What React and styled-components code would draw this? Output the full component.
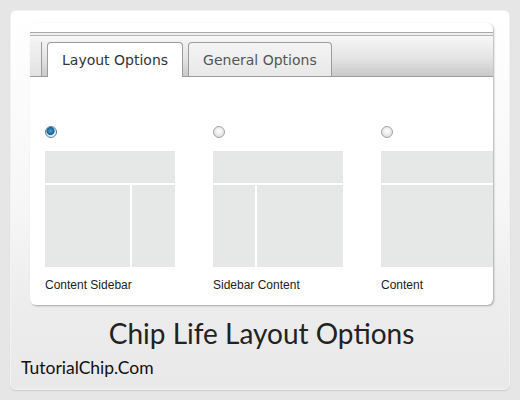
import React, { useState } from "react";
import styled, { createGlobalStyle } from "styled-components";

const Global = createGlobalStyle`
  html, body { margin: 0; padding: 0; background: #e6e6e6; }
  body { width: 520px; height: 400px; overflow: hidden; }
`;

const layouts = [
  { id: "cs", label: "Content Sidebar", cols: [85, 43] },
  { id: "sc", label: "Sidebar Content", cols: [42, 86] },
  { id: "c", label: "Content", cols: [130] },
];

function App() {
  const [tab, setTab] = useState("layout");
  const [choice, setChoice] = useState("cs");
  return (
    <>
      <Global />
      <Page>
        <Card>
          <Panel>
            <TopRule />
            <TabBar>
              <StubTab />
              <Tab active={tab === "layout"} onClick={() => setTab("layout")}>Layout Options</Tab>
              <Tab active={tab === "general"} onClick={() => setTab("general")}>General Options</Tab>
            </TabBar>
            <Options>
              {layouts.map((l) => (
                <Option key={l.id} onClick={() => setChoice(l.id)}>
                  <Radio checked={choice === l.id} />
                  <Preview>
                    <Header />
                    <Cols>
                      {l.cols.map((w, i) => (
                        <Col key={i} style={{ width: w }} />
                      ))}
                    </Cols>
                  </Preview>
                  <Label>{l.label}</Label>
                </Option>
              ))}
            </Options>
          </Panel>
          <Title>Chip Life Layout Options</Title>
          <Brand>TutorialChip.Com</Brand>
        </Card>
      </Page>
    </>
  );
}

const Page = styled.div`
  padding: 10px;
`;

const Card = styled.div`
  width: 500px;
  height: 380px;
  box-sizing: border-box;
  border-radius: 6px;
  background: linear-gradient(180deg, #ffffff 0px, #f6f6f6 200px, #ececec 300px, #e9e9e9 380px);
  border: 1px solid #f2f2f2;
  box-shadow: 0 1px 1px rgba(0,0,0,0.12);
  padding: 12px 16px 0 19px;
`;

const Panel = styled.div`
  width: 463px;
  height: 282px;
  background: #fff;
  border-radius: 6px;
  box-shadow: 1px 1px 2px rgba(0,0,0,0.3);
  overflow: hidden;
  padding-top: 9px;
  box-sizing: border-box;
`;

const TopRule = styled.div`
  height: 2px;
  border-top: 1px solid #a8a8a8;
  border-bottom: 1px solid #b4b4b4;
  background: #efefef;
`;

const TabBar = styled.div`
  display: flex;
  align-items: flex-end;
  gap: 5px;
  height: 40px;
  background: linear-gradient(180deg, #f7f7f7 0%, #e4e4e4 55%, #c9c9c9 100%);
  border-bottom: 1px solid #9c9c9c;
`;

const StubTab = styled.div`
  width: 11px;
  height: 34px;
  border-right: 1px solid #9c9c9c;
  background: linear-gradient(180deg, #f2f2f2, #e2e2e2);
`;

const Tab = styled.div`
  box-sizing: border-box;
  padding: 0 14px;
  margin-bottom: ${(p) => (p.active ? "-1px" : "0")};
  height: ${(p) => (p.active ? "35px" : "34px")};
  display: flex;
  align-items: center;
  border: 1px solid #9c9c9c;
  border-bottom: none;
  border-radius: 4px 4px 0 0;
  background: ${(p) => (p.active ? "#fff" : "linear-gradient(180deg, #f4f4f4, #e8e8e8)")};
  color: ${(p) => (p.active ? "#333" : "#555")};
  font-family: "DejaVu Sans", Verdana, sans-serif;
  font-size: 14px;
  cursor: pointer;
`;

const Options = styled.div`
  display: flex;
  gap: 38px;
  padding: 49px 0 0 15px;
`;

const Option = styled.div`
  display: flex;
  flex-direction: column;
  flex-shrink: 0;
  width: 130px;
  cursor: pointer;
`;

const Radio = styled.span`
  width: 12px;
  height: 12px;
  border-radius: 50%;
  box-sizing: border-box;
  border: 1px solid ${(p) => (p.checked ? "#5b7f99" : "#a4a4a4")};
  background: ${(p) =>
    p.checked
      ? "radial-gradient(circle at 45% 40%, #4aa1d0 0, #16628f 45%, #dfe9f0 55%, #fff 100%)"
      : "radial-gradient(circle at 50% 40%, #ffffff 0, #e6e6e6 60%, #cfcfcf 100%)"};
  margin-bottom: 13px;
`;

const Preview = styled.div`
  display: flex;
  flex-direction: column;
  gap: 2px;
  width: 130px;
`;

const Header = styled.div`
  height: 32px;
  background: #e6e7e7;
`;

const Cols = styled.div`
  display: flex;
  justify-content: space-between;
  height: 82px;
`;

const Col = styled.div`
  background: #e6e7e7;
`;

const Label = styled.div`
  margin-top: 11px;
  font-family: "Liberation Sans", Arial, sans-serif;
  font-size: 12px;
  color: #222;
`;

const Title = styled.div`
  margin-top: 11px;
  text-align: center;
  font-family: Lato, "Open Sans", sans-serif;
  font-size: 28px;
  color: #222;
  line-height: 34px;
`;

const Brand = styled.div`
  margin: 7px 0 0 -9px;
  font-family: Lato, "Open Sans", sans-serif;
  font-size: 17.5px;
  color: #111;
`;

export default App;
